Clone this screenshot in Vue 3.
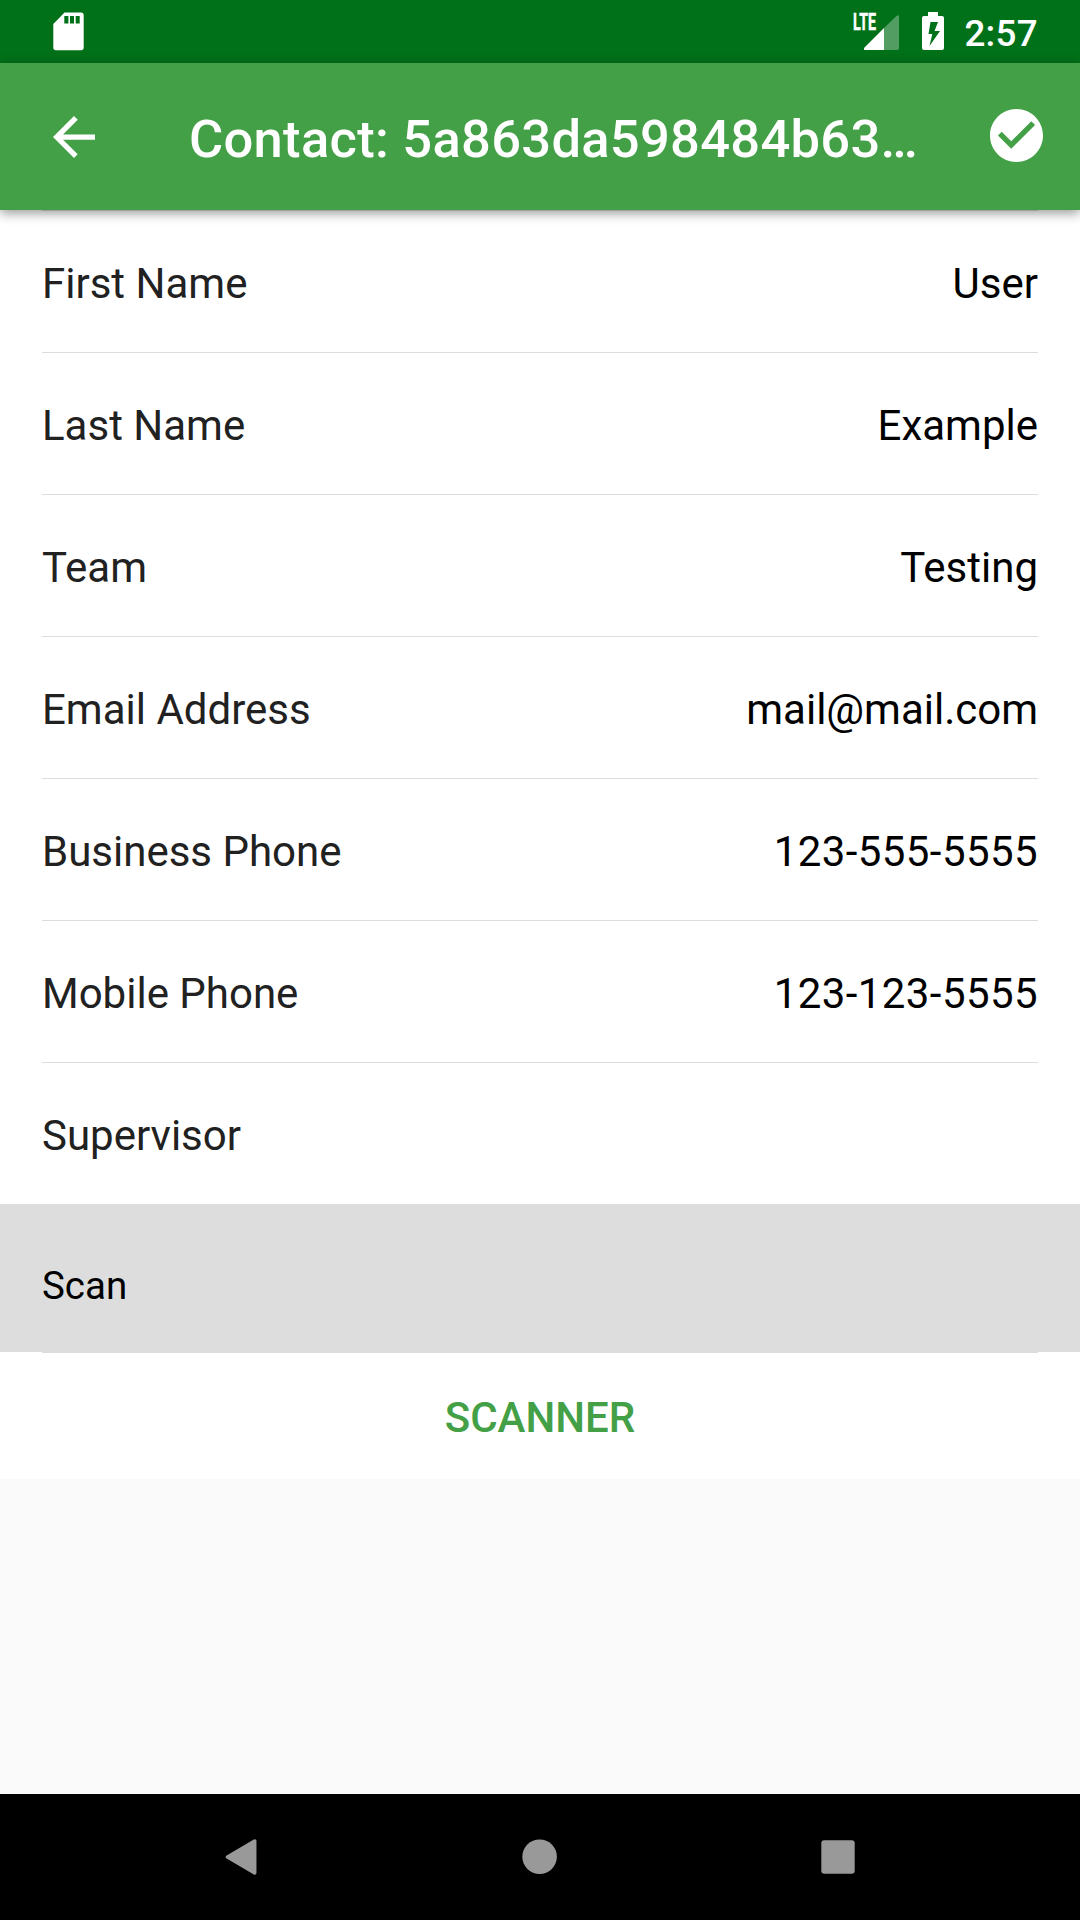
<script setup>
const rows = [
  ['First Name', 'User'],
  ['Last Name', 'Example'],
  ['Team', 'Testing'],
  ['Email Address', 'mail@mail.com'],
  ['Business Phone', '123-555-5555'],
  ['Mobile Phone', '123-123-5555'],
  ['Supervisor', ''],
]
</script>

<template>
  <div class="screen">
    <header class="status">
      <svg class="sd" width="31" height="39" viewBox="0 0 31 39"><path fill="#fff" fill-rule="evenodd" d="M11.5 .5H28Q30.7 .5 30.7 3.2V35.5Q30.7 38.3 28 38.3H3Q.3 38.3 .3 35.5V12ZM11.3 4V11.6H15.4V4ZM17 4V11.6H21V4ZM22.7 4V11.6H26.7V4Z" /></svg>
      <div class="right">
        <svg class="signal" width="36" height="36" viewBox="0 0 36 36">
          <path fill="#fff" fill-opacity=".32" d="M20 13L32.5 1Q35 -1 35 2V33Q35 35 33 35H20Z" />
          <path fill="#fff" d="M20 13V35H1.5Q-1 35 .5 32.5Z" />
        </svg>
        <span class="lte">LTE</span>
        <svg class="battery" width="22" height="38" viewBox="0 0 22 38"><path fill="#fff" fill-rule="evenodd" d="M6 0H16V4H20Q22 4 22 6V36Q22 38 20 38H2Q0 38 0 36V6Q0 4 2 4H6ZM8.5 10L6.5 22H10.3L7.5 34L18 19H12.5L16 10Z" /></svg>
        <span class="clock">2:57</span>
      </div>
    </header>
    <div class="toolbar">
      <svg class="back" width="42" height="42" viewBox="4 4 16 16"><path fill="#fff" d="M20 11H7.83l5.59-5.59L12 4l-8 8 8 8 1.41-1.41L7.83 13H20v-2z" /></svg>
      <h1>Contact: 5a863da598484b63…</h1>
      <svg class="check" width="53" height="53" viewBox="2 2 20 20"><path fill="#fff" d="M12 2C6.48 2 2 6.48 2 12s4.48 10 10 10 10-4.48 10-10S17.52 2 12 2zm-2 15l-5-5 1.41-1.41L10 14.17l7.59-7.59L19 8l-9 9z" /></svg>
    </div>
    <main>
      <div v-for="r in rows" :key="r[0]" class="row"><span class="label">{{ r[0] }}</span><span :class="{ phone: r[0].endsWith('Phone') }">{{ r[1] }}</span></div>
      <div class="section">Scan</div>
      <div class="button">SCANNER</div>
    </main>
    <nav>
      <svg width="1080" height="126" viewBox="0 0 1080 126" fill="#999"><path d="M227.500 63L254.700 47V79Z" stroke="#999" stroke-width="3.500" stroke-linejoin="round" /><circle cx="539.6" cy="62.7" r="17.3" /><rect x="821.3" y="46.3" width="33.4" height="33.4" rx="3" /></svg>
    </nav>
  </div>
</template>

<style>
body { margin: 0; }
</style>
<style scoped>
.screen { width: 1080px; height: 1920px; display: flex; flex-direction: column; background: #fafafa; font-family: Roboto, sans-serif; color: #000; overflow: hidden; }
.status { height: 63px; flex: none; background: #007119; display: flex; justify-content: space-between; box-sizing: border-box; padding: 12px 42px 0 53px; color: #fff; }
.right { display: flex; position: relative; }
.signal { margin: 3px 22px 0 0; }
.lte { position: absolute; left: -11px; top: -1px; font-size: 23px; line-height: 23px; font-weight: 700; -webkit-text-stroke: .5px #fff; transform: scaleX(.62); transform-origin: 0 0; }
.battery { margin-right: 20px; }
.clock { font-size: 36.75px; line-height: 44px; font-weight: 500; letter-spacing: .3px; }
.toolbar { height: 147px; flex: none; display: flex; align-items: center; box-sizing: border-box; padding: 0 37px 0 53px; background: #43a047; box-shadow: 0 3px 11px rgba(0,0,0,.42); z-index: 1; }
.check { margin-bottom: 2px; }
h1 { margin: 5px 0 0 94px; font-size: 52.5px; line-height: 62px; font-weight: 500; color: #fff; flex: 1; white-space: nowrap; letter-spacing: .28px; }
main { background: #fff; font-size: 42px; }
.row { height: 142px; margin: 0 42px; display: flex; align-items: center; justify-content: space-between; box-sizing: border-box; border-top: 1px solid #ddd; padding-top: 3px; }
.label { color: #212121; }
.phone { letter-spacing: .42px; }
.section { height: 148px; line-height: 164px; background: #ddd; padding-left: 42px; font-size: 38.5px; }
.button { height: 126px; margin: 0 42px; border-top: 1px solid #ddd; line-height: 129px; text-align: center; color: #43a047; font-weight: 500; }
nav { height: 126px; background: #000; margin-top: auto; }
</style>
